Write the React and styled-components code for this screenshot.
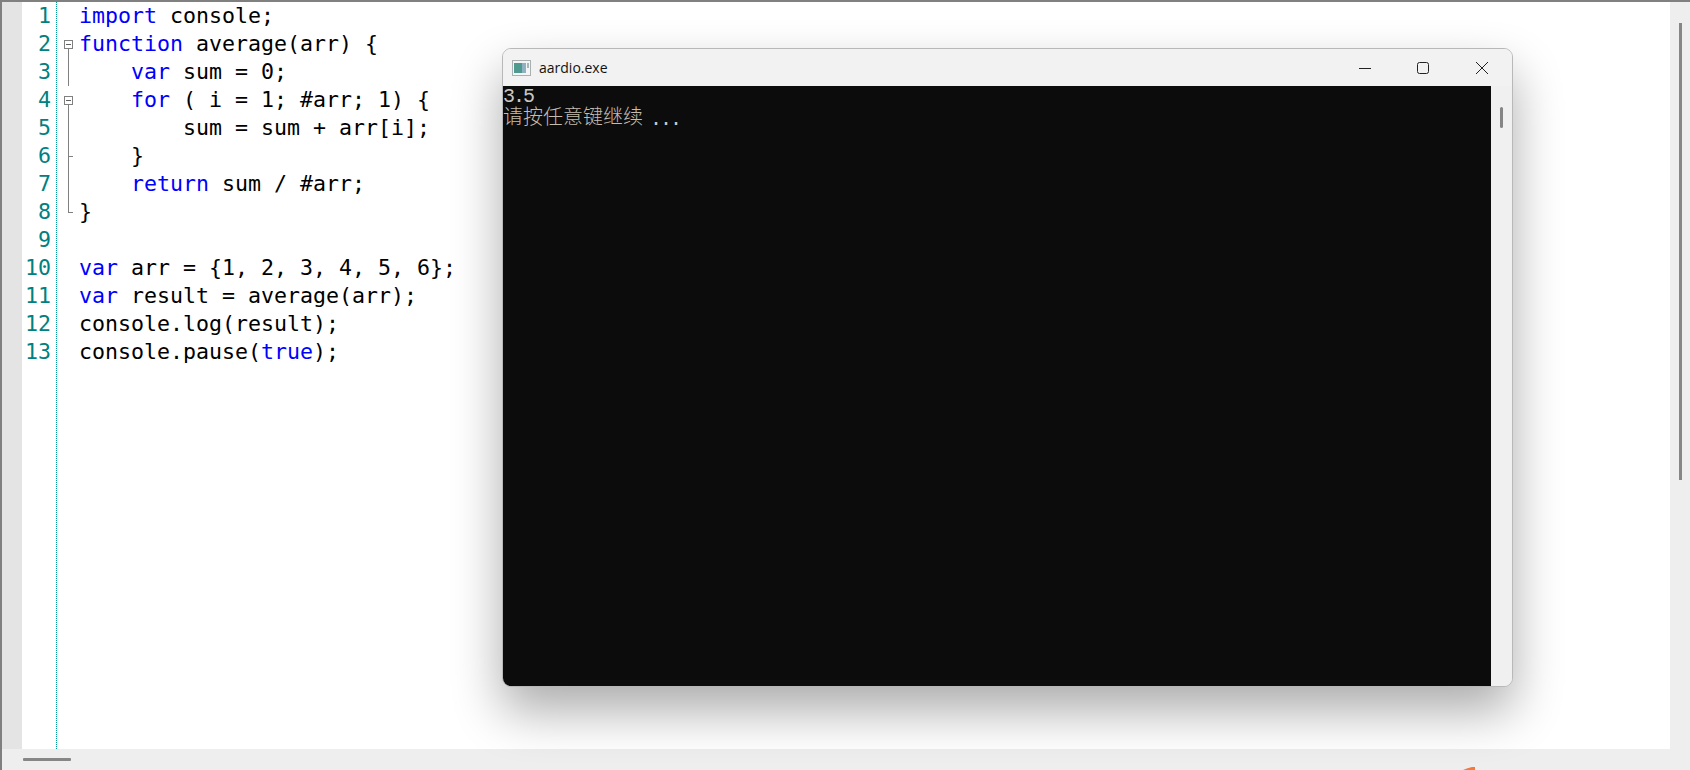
import React from 'react';
import styled, { createGlobalStyle } from 'styled-components';

const GlobalStyle = createGlobalStyle`
  html, body {
    margin: 0;
    padding: 0;
    height: 100%;
    overflow: hidden;
    background: #eeeeee;
  }
`;

const KW = ({ children }) => <Keyword>{children}</Keyword>;

const lines = [
  { code: <><KW>import</KW> console;</> },
  { fold: 'open', code: <><KW>function</KW> average(arr) {'{'}</> },
  { fold: 'line', code: <>    <KW>var</KW> sum = 0;</> },
  { fold: 'open', code: <>    <KW>for</KW> ( i = 1; #arr; 1) {'{'}</> },
  { fold: 'line', code: <>        sum = sum + arr[i];</> },
  { fold: 'tick', code: <>    {'}'}</> },
  { fold: 'line', code: <>    <KW>return</KW> sum / #arr;</> },
  { fold: 'end', code: <>{'}'}</> },
  { code: '' },
  { code: <><KW>var</KW> arr = {'{'}1, 2, 3, 4, 5, 6{'}'};</> },
  { code: <><KW>var</KW> result = average(arr);</> },
  { code: <>console.log(result);</> },
  { code: <>console.pause(<KW>true</KW>);</> },
];

const App = () => {
  return (
    <>
      <GlobalStyle />
      <Page>
        <Main>
          <Editor>
            <Shade />
            <Margin>
              {lines.map((line, i) => (
                <LineNo key={i}>{i + 1}</LineNo>
              ))}
            </Margin>
            <FoldColumn>
              {lines.map((line, i) => (
                <FoldCell key={i} $kind={line.fold}>
                  {line.fold === 'open' && <FoldBox />}
                </FoldCell>
              ))}
            </FoldColumn>
            <Code>
              {lines.map((line, i) => (
                <CodeLine key={i}>{line.code}</CodeLine>
              ))}
            </Code>
          </Editor>
          <VScroll>
            <VThumb />
          </VScroll>
        </Main>
        <HScroll>
          <HThumb />
          <Mark>
            <svg width="12" height="3" viewBox="0 0 12 3">
              <path d="M0 3C3 1.6 6 .6 9 0h3v3z" fill="#f47a3c" />
            </svg>
          </Mark>
        </HScroll>
        <ConsoleWindow>
          <TitleBar>
            <AppIcon>
              <svg width="20" height="16" viewBox="0 0 20 16">
                <rect x="0.5" y="0.5" width="18" height="15" fill="#f4f6f6" stroke="#a8b0b2" />
                <rect x="2" y="3" width="8" height="10" fill="#4f9a8e" />
                <rect x="10" y="3" width="4" height="10" fill="#8fb2c0" />
                <rect x="15" y="3" width="2" height="5" fill="#a9b6ba" />
              </svg>
            </AppIcon>
            <Title>aardio.exe</Title>
            <Controls>
              <Control>
                <svg width="14" height="14" viewBox="0 0 14 14">
                  <path d="M1 7.5h12" stroke="#222" strokeWidth="1" fill="none" />
                </svg>
              </Control>
              <Control>
                <svg width="14" height="14" viewBox="0 0 14 14">
                  <rect x="1.5" y="1.5" width="11" height="11" rx="2" stroke="#222" strokeWidth="1" fill="none" />
                </svg>
              </Control>
              <Control>
                <svg width="14" height="14" viewBox="0 0 14 14">
                  <path d="M1 1l12 12M13 1L1 13" stroke="#222" strokeWidth="1" fill="none" />
                </svg>
              </Control>
            </Controls>
          </TitleBar>
          <ConsoleBody>
            <Output>
              <OutLine>3.5</OutLine>
              <OutLine>
                <Cjk>请按任意键继续</Cjk> ...
              </OutLine>
            </Output>
            <ConsoleScroll>
              <ConsoleThumb />
            </ConsoleScroll>
          </ConsoleBody>
        </ConsoleWindow>
      </Page>
    </>
  );
};

const Page = styled.div`
  position: relative;
  width: 1690px;
  height: 770px;
  display: flex;
  flex-direction: column;
  overflow: hidden;
  background: #eeeeee;
  border-top: 2px solid #808080;
  border-left: 2px solid #808080;
  box-sizing: border-box;
`;

const Main = styled.div`
  flex: 1;
  display: flex;
  min-height: 0;
`;

const Editor = styled.div`
  width: 1668px;
  display: flex;
  background: #ffffff;
`;

const Shade = styled.div`
  width: 20px;
  background: #e4e4e4;
`;

const Margin = styled.div`
  width: 34px;
`;

const rowStyle = `
  height: 28px;
  line-height: 28px;
  font-family: "DejaVu Sans Mono", monospace;
  font-size: 21.6px;
`;

const LineNo = styled.div`
  ${rowStyle}
  text-align: right;
  padding-right: 5px;
  color: #008080;
`;

const FoldColumn = styled.div`
  width: 23px;
  box-sizing: border-box;
  padding-left: 1px;
  background: repeating-linear-gradient(to bottom, #009a9a 0 1px, #ffffff 1px 2px) left top / 1px 100% no-repeat;
`;

const FoldCell = styled.div`
  position: relative;
  height: 28px;
  display: flex;
  align-items: flex-start;
  padding: 10px 0 0 7px;
  box-sizing: border-box;

  ${(p) =>
    p.$kind &&
    p.$kind !== 'open' &&
    `
    &::before {
      content: '';
      position: absolute;
      left: 11px;
      top: 0;
      width: 1px;
      height: ${p.$kind === 'end' ? '15px' : '28px'};
      background: #808080;
    }
  `}

  ${(p) =>
    (p.$kind === 'tick' || p.$kind === 'end') &&
    `
    &::after {
      content: '';
      position: absolute;
      left: 11px;
      top: 14px;
      width: 5px;
      height: 1px;
      background: #808080;
    }
  `}
`;

const FoldBox = styled.div`
  position: relative;
  width: 7px;
  height: 7px;
  border: 1px solid #808080;
  background: #ffffff;

  &::before {
    content: '';
    position: absolute;
    left: 1px;
    top: 3px;
    width: 5px;
    height: 1px;
    background: #606060;
  }

  &::after {
    content: '';
    position: absolute;
    left: 3px;
    top: 8px;
    width: 1px;
    height: 10px;
    background: #808080;
  }
`;

const Code = styled.div`
  flex: 1;
`;

const CodeLine = styled.div`
  ${rowStyle}
  width: fit-content;
  white-space: pre;
  color: #000000;
`;

const Keyword = styled.span`
  color: #0000ff;
`;

const VScroll = styled.div`
  flex: 1;
  display: flex;
  justify-content: center;
  padding-top: 21px;
`;

const VThumb = styled.div`
  width: 3px;
  height: 457px;
  background: #868686;
`;

const HScroll = styled.div`
  position: relative;
  height: 21px;
  flex-shrink: 0;
  padding: 9px 0 0 21px;
  box-sizing: border-box;
`;

const HThumb = styled.div`
  width: 48px;
  height: 3px;
  background: #868686;
  border-radius: 1px;
`;

const Mark = styled.div`
  position: absolute;
  left: 1461px;
  bottom: 0;
  display: flex;
`;

const ConsoleWindow = styled.div`
  position: absolute;
  left: 500px;
  top: 46px;
  width: 1011px;
  height: 639px;
  box-sizing: border-box;
  display: flex;
  flex-direction: column;
  background: #f0f0f0;
  border: 1px solid #b8b8b8;
  border-radius: 9px;
  overflow: hidden;
  box-shadow: 0 24px 50px rgba(0, 0, 0, 0.33);
`;

const TitleBar = styled.div`
  height: 37px;
  flex-shrink: 0;
  display: flex;
  align-items: center;
  padding-left: 9px;
  background: #f2f2f2;
`;

const AppIcon = styled.div`
  display: flex;
  width: 27px;
`;

const Title = styled.div`
  flex: 1;
  font-family: "Open Sans", sans-serif;
  font-size: 14px;
  color: #111111;
`;

const Controls = styled.div`
  display: flex;
  height: 100%;
  padding-right: 1px;
`;

const Control = styled.div`
  width: 58.5px;
  display: flex;
  align-items: center;
  justify-content: center;
`;

const ConsoleBody = styled.div`
  flex: 1;
  display: flex;
  min-height: 0;
`;

const Output = styled.div`
  flex: 1;
  background: #0c0c0c;
  color: #c8c8c8;
  font-family: "Liberation Mono", monospace;
  font-size: 20px;
  letter-spacing: -2px;
  padding-top: 1px;
`;

const OutLine = styled.div`
  height: 20px;
  line-height: 20px;
  white-space: pre;
`;

const Cjk = styled.span`
  font-family: "Noto Sans CJK SC", sans-serif;
  font-size: 20px;
  font-weight: 300;
  letter-spacing: 0;
  margin-right: -3px;
  color: #c4bcb0;
  position: relative;
  top: -1px;
`;

const ConsoleScroll = styled.div`
  width: 21px;
  flex-shrink: 0;
  background: #f0f0f0;
  display: flex;
  justify-content: center;
  padding-top: 21px;
  box-sizing: border-box;
`;

const ConsoleThumb = styled.div`
  width: 3px;
  height: 21px;
  background: #858585;
  border-radius: 2px;
`;

export default App;
